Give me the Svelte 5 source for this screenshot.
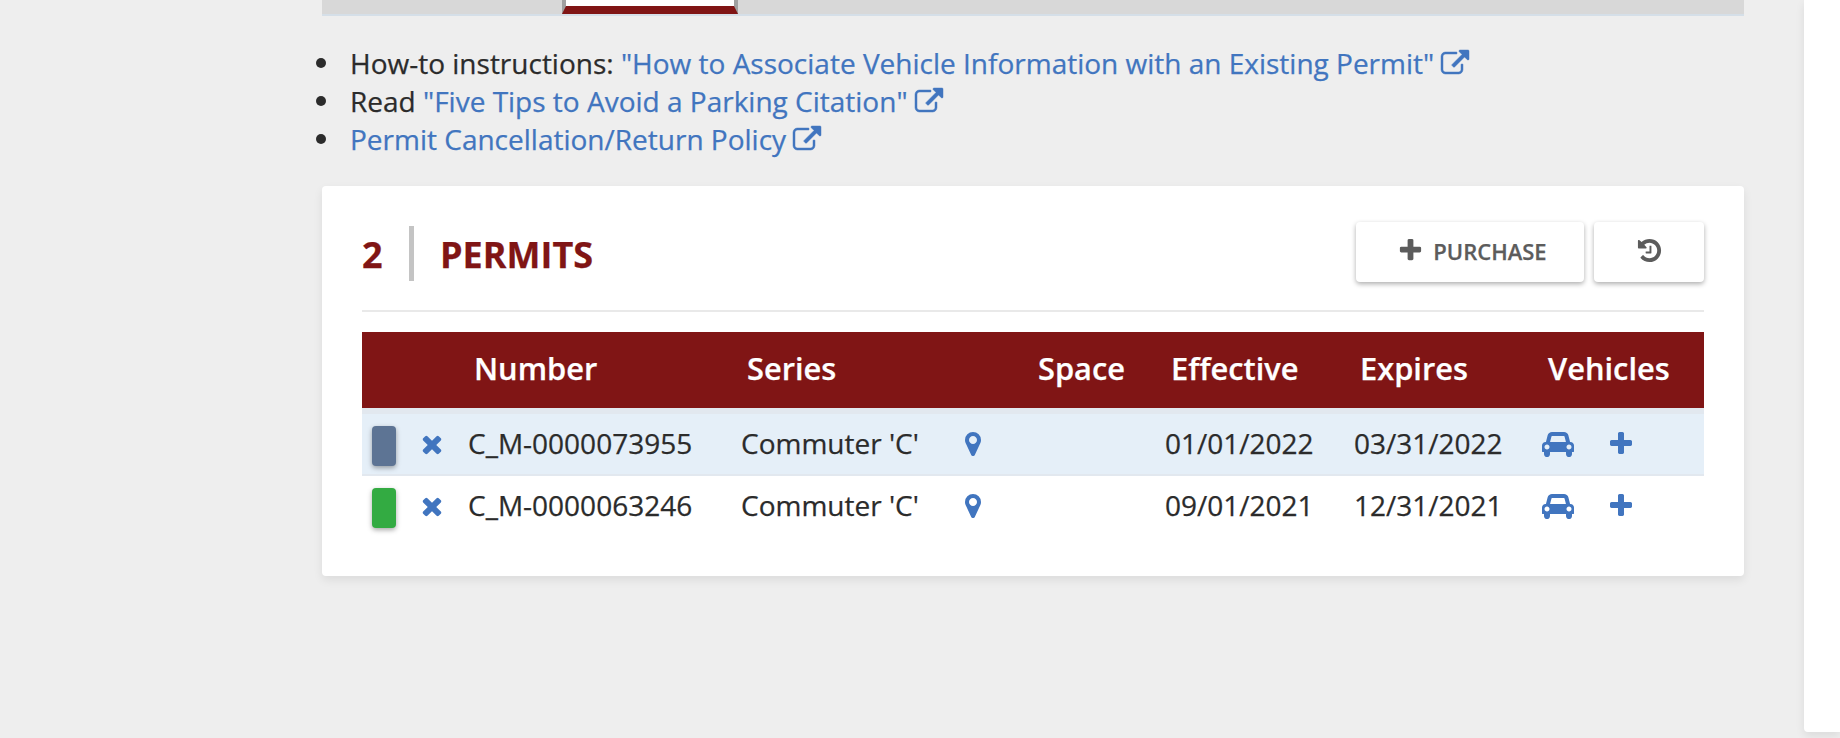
<script>
  const paths = {
    external:
      'M1408 928v320q0 119-84.5 203.5t-203.5 84.5h-832q-119 0-203.5-84.5t-84.5-203.5v-832q0-119 84.5-203.5t203.5-84.5h704q14 0 23 9t9 23v64q0 14-9 23t-23 9h-704q-66 0-113 47t-47 113v832q0 66 47 113t113 47h832q66 0 113-47t47-113v-320q0-14 9-23t23-9h64q14 0 23 9t9 23zm384-864v512q0 26-19 45t-45 19-45-19l-176-176-652 652q-10 10-23 10t-23-10l-114-114q-10-10-10-23t10-23l652-652-176-176q-19-19-19-45t19-45 45-19h512q26 0 45 19t19 45z',
    plus:
      'M1600 736v192q0 40-28 68t-68 28h-416v416q0 40-28 68t-68 28h-192q-40 0-68-28t-28-68v-416h-416q-40 0-68-28t-28-68v-192q0-40 28-68t68-28h416v-416q0-40 28-68t68-28h192q40 0 68 28t28 68v416h416q40 0 68 28t28 68z',
    times:
      'M1490 1322q0 40-28 68l-136 136q-28 28-68 28t-68-28l-294-294-294 294q-28 28-68 28t-68-28l-136-136q-28-28-28-68t28-68l294-294-294-294q-28-28-28-68t28-68l136-136q28-28 68-28t68 28l294 294 294-294q28-28 68-28t68 28l136 136q28 28 28 68t-28 68l-294 294 294 294q28 28 28 68z',
    history:
      'M1664 896q0 156-61 298t-164 245-245 164-298 61q-172 0-327-72.5t-264-204.5q-7-10-6.500-22.500t8.500-20.500l137-138q10-9 25-9 16 2 23 12 73 95 179 147t225 52q104 0 198.500-40.500t163.500-109.500 109.500-163.500 40.500-198.500-40.500-198.500-109.500-163.500-163.500-109.500-198.500-40.500q-98 0-188 35.500t-160 101.500l137 138q31 30 14 69-17 40-59 40h-448q-26 0-45-19t-19-45v-448q0-42 40-59 39-17 69 14l130 129q107-101 244.500-156.500t284.500-55.500q156 0 298 61t245 164 164 245 61 298zm-640-288v448q0 14-9 23t-23 9h-320q-14 0-23-9t-9-23v-64q0-14 9-23t23-9h224v-352q0-14 9-23t23-9h64q14 0 23 9t9 23z',
    pin:
      'M1152 640q0-106-75-181t-181-75-181 75-75 181 75 181 181 75 181-75 75-181zm256 0q0 109-33 179l-364 774q-16 33-47.500 52t-67.500 19-67.500-19-46.500-52l-365-774q-33-70-33-179 0-212 150-362t362-150 362 150 150 362z',
    car:
      'M480 1088q0-66-47-113t-113-47-113 47-47 113 47 113 113 47 113-47 47-113zm36-320h1016l-89-357q-2-8-14-17.500t-21-9.500h-768q-9 0-21 9.500t-14 17.500zm1372 320q0-66-47-113t-113-47-113 47-47 113 47 113 113 47 113-47 47-113zm160-96v384q0 14-9 23t-23 9h-96v128q0 80-56 136t-136 56-136-56-56-136v-128h-1024v128q0 80-56 136t-136 56-136-56-56-136v-128h-96q-14 0-23-9t-9-23v-384q0-93 65.500-158.500t158.500-65.500h28l105-419q23-94 104-157.500t179-63.500h768q98 0 179 63.500t104 157.500l105 419h28q93 0 158.500 65.500t65.500 158.500z'
  };

  const links = [
    { lead: 'How-to instructions: ', label: '"How to Associate Vehicle Information with an Existing Permit"' },
    { lead: 'Read ', label: '"Five Tips to Avoid a Parking Citation"' },
    { lead: '', label: 'Permit Cancellation/Return Policy' }
  ];

  const columns = ['', '', 'Number', 'Series', '', 'Space', 'Effective', 'Expires', 'Vehicles'];

  const permits = [
    { color: '#5d7494', number: 'C_M-0000073955', series: "Commuter 'C'", from: '01/01/2022', to: '03/31/2022' },
    { color: '#33ab42', number: 'C_M-0000063246', series: "Commuter 'C'", from: '09/01/2021', to: '12/31/2021' }
  ];
</script>

{#snippet icon(name, size, box = '0 0 1792 1792', width = size)}
  <svg class="icon" {width} height={size} viewBox={box} aria-hidden="true"><path d={paths[name]} /></svg>
{/snippet}

<div class="page">
  <main>
    <div class="tabs"><div class="tab"></div></div>

    <ul class="links">
      {#each links as link}
        <li>{link.lead}<a href="#top">{link.label}<span class="ext">{@render icon('external', 28)}</span></a></li>
      {/each}
    </ul>

    <section class="card">
      <header>
        <h2><span class="count">{permits.length}</span><span>PERMITS</span></h2>
        <div class="actions">
          <button class="purchase">{@render icon('plus', 27)}<span>PURCHASE</span></button>
          <button class="history" aria-label="History">{@render icon('history', 27)}</button>
        </div>
      </header>

      <div class="table">
        <div class="row head">
          {#each columns as column}<div>{column}</div>{/each}
        </div>
        {#each permits as permit}
          <div class="row body">
            <div class="swatch-cell"><span class="swatch" style="background: {permit.color}"></span></div>
            <div class="x-cell">{@render icon('times', 28)}</div>
            <div class="text">{permit.number}</div>
            <div class="text">{permit.series}</div>
            <div class="pin-cell">{@render icon('pin', 28)}</div>
            <div></div>
            <div class="text">{permit.from}</div>
            <div class="text">{permit.to}</div>
            <div class="vehicle-cell">
              {@render icon('car', 28, '0 0 2048 1792', 32)}
              {@render icon('plus', 28)}
            </div>
          </div>
        {/each}
      </div>
    </section>
  </main>
  <aside></aside>
</div>

<style>
  :global(body) {
    margin: 0;
    background: #eee;
  }
  .page {
    box-sizing: border-box;
    width: 1840px;
    height: 738px;
    padding-left: 322px;
    display: flex;
    gap: 60px;
    overflow: hidden;
    background: #eee;
    color: #2b2b2b;
    font: 28px/38px 'Open Sans', sans-serif;
    -webkit-text-stroke: 0.25px currentColor;
  }
  main {
    width: 1422px;
    flex: none;
  }
  aside {
    flex: 1;
    height: 732px;
    background: #fff;
    border-bottom-left-radius: 4px;
    box-shadow: 0 4px 10px rgba(0, 0, 0, 0.08);
  }
  .tabs {
    box-sizing: border-box;
    height: 16px;
    padding-left: 240px;
    background: #d8d8d8;
    border-bottom: 2px solid #d5dfe8;
  }
  .tab {
    box-sizing: border-box;
    width: 176px;
    height: 14px;
    background: #fff;
    border: solid #a0a0a0;
    border-width: 0 4px 8px;
    border-bottom-color: #801515;
  }
  .links {
    margin: 28px 0 28px;
    padding: 0 0 0 28px;
    list-style: none;
  }
  .links li {
    display: flex;
    height: 38px;
    white-space: pre;
  }
  .links li::before {
    content: '';
    width: 10px;
    height: 10px;
    margin: 14px 24px 0 -34px;
    border-radius: 50%;
    background: #2b2b2b;
  }
  a {
    display: flex;
    color: #4175bf;
    text-decoration: none;
  }
  .ext {
    display: flex;
    margin: 6px 0 0 7px;
  }
  .icon {
    display: block;
    flex: none;
    fill: currentColor;
  }
  .ext :global(.icon) {
    overflow: visible;
    stroke: currentColor;
    stroke-width: 30;
  }
  .card {
    box-sizing: border-box;
    height: 390px;
    padding: 36px 40px 0;
    background: #fff;
    border-radius: 4px;
    box-shadow: 0 4px 10px rgba(0, 0, 0, 0.08);
  }
  header {
    box-sizing: border-box;
    height: 90px;
    display: flex;
    justify-content: space-between;
    border-bottom: 2px solid #e9e9e9;
    margin-bottom: 20px;
  }
  h2 {
    display: flex;
    height: 55px;
    margin: 4px 0 0;
    color: #801515;
    font-size: 36px;
    line-height: 57px;
    font-weight: 700;
  }
  .count {
    box-sizing: border-box;
    width: 52px;
    margin-right: 26px;
    border-right: 5px solid #c4c4c4;
  }
  .actions {
    display: flex;
    gap: 10px;
    height: 60px;
  }
  button {
    box-sizing: border-box;
    display: flex;
    align-items: center;
    justify-content: center;
    height: 60px;
    padding: 0 0 3px;
    border: 0;
    border-radius: 4px;
    background: #fff;
    color: #5c5c5c;
    font: 600 22px/30px 'Open Sans', sans-serif;
    box-shadow: 0 2px 5px rgba(0, 0, 0, 0.32);
  }
  .purchase {
    width: 228px;
    padding-left: 4px;
    gap: 9px;
  }
  .purchase span {
    padding-top: 1px;
  }
  .history {
    width: 110px;
  }
  .row {
    display: grid;
    grid-template-columns: 48px 53px 273px 222px 69px 133px 189px 188px 169px;
    align-items: center;
  }
  .head {
    box-sizing: border-box;
    height: 76px;
    padding-bottom: 5px;
    background: #801515;
    color: #fff;
    font-size: 30.8px;
    font-weight: 600;
  }
  .head > div {
    padding-left: 11px;
  }
  .body {
    box-sizing: border-box;
    height: 60px;
  }
  .body > div {
    padding-left: 5px;
  }
  .body:nth-child(2) {
    height: 68px;
    background: #e5eff8;
    border: solid #e2e8ef;
    border-width: 6px 0 2px;
  }
  .body .swatch-cell {
    padding: 4px 0 0 10px;
  }
  .swatch {
    display: block;
    width: 24px;
    height: 40px;
    border-radius: 4px;
    box-shadow: 0 2px 5px rgba(0, 0, 0, 0.35);
  }
  .body .text {
    padding-bottom: 2px;
  }
  .x-cell,
  .pin-cell,
  .vehicle-cell {
    display: flex;
    color: #4175bf;
  }
  .body .x-cell {
    padding-left: 8px;
  }
  .body .pin-cell {
    padding-left: 1px;
  }
  .vehicle-cell {
    gap: 33px;
  }
</style>
